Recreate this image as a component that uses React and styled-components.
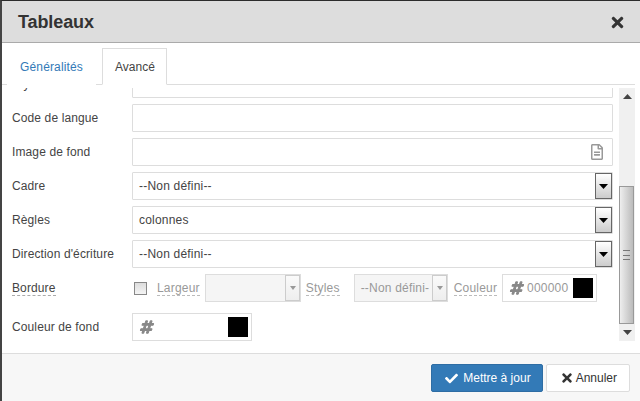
import React from "react";
import styled, { createGlobalStyle } from "styled-components";
import { FaCheck, FaTimes, FaRegFileAlt, FaHashtag } from "react-icons/fa";

const Global = createGlobalStyle`
  html, body {
    margin: 0;
    padding: 0;
    background: #fff;
  }
  body {
    font-family: "Liberation Sans", Arial, sans-serif;
    font-size: 12px;
    color: #333;
  }
`;

const rows = [
  { label: "Code de langue", type: "text" },
  { label: "Image de fond", type: "file" },
  { label: "Cadre", type: "select", value: "--Non défini--" },
  { label: "Règles", type: "select", value: "colonnes" },
  { label: "Direction d'écriture", type: "select", value: "--Non défini--" },
];

const Arrow = ({ up }) => (
  <svg width="9" height="5" viewBox="0 0 9 5">
    <path d={up ? "M0 5 L4.5 0 L9 5 Z" : "M0 0 L9 0 L4.5 5 Z"} fill="currentColor" />
  </svg>
);

const App = () => {
  return (
    <Dialog>
      <Global />
      <Header>
        <Title>Tableaux</Title>
        <CloseIcon>
          <FaTimes size={17} />
        </CloseIcon>
      </Header>

      <Tabs>
        <Tab>Généralités</Tab>
        <Tab active>Avancé</Tab>
      </Tabs>

      <Body>
        <Pane>
          <Row clipped>
            <Label>Style</Label>
            <TextBox />
          </Row>
          {rows.map((row) => (
            <Row key={row.label}>
              <Label>{row.label}</Label>
              <TextBox>
                {row.value && <Value>{row.value}</Value>}
                {row.type === "file" && (
                  <FileIcon>
                    <FaRegFileAlt size={16} />
                  </FileIcon>
                )}
                {row.type === "select" && (
                  <SelectButton>
                    <Arrow />
                  </SelectButton>
                )}
              </TextBox>
            </Row>
          ))}
          <Row>
            <Label>
              <Dashed>Bordure</Dashed>
            </Label>
            <Inline>
              <Check />
              <SubLabel before="10px" after="5px">
                Largeur
              </SubLabel>
              <MiniSelect width="96px" />
              <SubLabel before="5px" after="14px">
                Styles
              </SubLabel>
              <MiniSelect width="94px">
                <MiniValue>--Non défini-</MiniValue>
              </MiniSelect>
              <SubLabel before="6px" after="5px">
                Couleur
              </SubLabel>
              <ColorBox width="95px">
                <Hash>
                  <FaHashtag size={14} stroke="currentColor" strokeWidth={40} />
                </Hash>
                <ColorText>000000</ColorText>
                <Swatch />
              </ColorBox>
            </Inline>
          </Row>
          <Row last>
            <Label>Couleur de fond</Label>
            <ColorBox width="120px">
              <Hash>
                <FaHashtag size={14} stroke="currentColor" strokeWidth={40} />
              </Hash>
              <Swatch />
            </ColorBox>
          </Row>
        </Pane>

        <Scrollbar>
          <ScrollEnd>
            <Arrow up />
          </ScrollEnd>
          <Track>
            <Thumb>
              <Grip />
            </Thumb>
          </Track>
          <ScrollEnd>
            <Arrow />
          </ScrollEnd>
        </Scrollbar>
      </Body>

      <Footer>
        <Button primary>
          <FaCheck size={13} />
          Mettre à jour
        </Button>
        <Button>
          <FaTimes size={14} />
          Annuler
        </Button>
      </Footer>
    </Dialog>
  );
};

const Dialog = styled.div`
  width: 640px;
  height: 401px;
  box-sizing: border-box;
  border-top: 1px solid #2b2b2b;
  border-left: 2px solid #444;
  display: flex;
  flex-direction: column;
  background: #fff;
  overflow: hidden;
`;

const Header = styled.div`
  height: 42px;
  flex: none;
  box-sizing: border-box;
  background: #dddddd;
  border-bottom: 1px solid #aaa;
  display: flex;
  align-items: center;
  justify-content: space-between;
  padding: 2px 14px 0 16px;
`;

const Title = styled.div`
  font-size: 18px;
  font-weight: bold;
  letter-spacing: -0.1px;
  color: #333;
`;

const CloseIcon = styled.div`
  display: flex;
  color: #333;
`;

const Tabs = styled.div`
  height: 42px;
  flex: none;
  box-sizing: border-box;
  padding: 5px 0 0 5px;
  margin-right: 5px;
  border-bottom: 1px solid #ddd;
  display: flex;
  gap: 6px;
`;

const Tab = styled.div`
  height: 37px;
  box-sizing: border-box;
  padding: 0 ${(p) => (p.active ? "11px" : "12px")} 0 12px;
  display: flex;
  align-items: center;
  font-size: 12px;
  letter-spacing: ${(p) => (p.active ? "0" : "0.15px")};
  color: ${(p) => (p.active ? "#444" : "#337ab7")};
  border: 1px solid ${(p) => (p.active ? "#ddd" : "transparent")};
  border-bottom: ${(p) => (p.active ? "1px solid #fff" : "none")};
  background: #fff;
`;

const Body = styled.div`
  flex: 1;
  min-height: 0;
  padding-top: 3px;
  display: flex;
`;

const Pane = styled.div`
  flex: 1;
  min-width: 0;
  overflow: hidden;
  padding: 0 5px 0 10px;
  display: flex;
  flex-direction: column;
`;

const Row = styled.div`
  display: flex;
  align-items: center;
  flex: none;
  height: 28px;
  margin-top: ${(p) => (p.clipped ? "-18px" : p.last ? "11px" : "6px")};
`;

const Label = styled.div`
  width: 120px;
  flex: none;
  font-size: 12px;
  letter-spacing: 0.12px;
  color: #444;
`;

const Dashed = styled.span`
  display: inline-block;
  line-height: 14px;
  border-bottom: 1px dashed #aaa;
`;

const TextBox = styled.div`
  position: relative;
  flex: 1;
  height: 28px;
  box-sizing: border-box;
  border: 1px solid #ddd;
  display: flex;
  align-items: center;
  border-radius: 1px;
`;

const Value = styled.span`
  padding-left: 6px;
  font-size: 12px;
  letter-spacing: 0.2px;
  color: #444;
`;

const FileIcon = styled.span`
  margin-left: auto;
  margin-right: 7px;
  display: flex;
  color: #999;
`;

const SelectButton = styled.div`
  margin-left: auto;
  width: 17px;
  height: 26px;
  box-sizing: border-box;
  border: 1px solid #666;
  background: linear-gradient(#fff, #ccc);
  display: flex;
  align-items: center;
  justify-content: center;
  color: #000;
`;

const Inline = styled.div`
  display: flex;
  align-items: center;
  margin-left: 2px;
`;

const Check = styled.div`
  width: 13px;
  height: 13px;
  box-sizing: border-box;
  border: 1px solid #888;
  background: linear-gradient(#ddd, #f4f4f4);
`;

const SubLabel = styled.span`
  font-size: 12px;
  letter-spacing: 0.2px;
  color: #999;
  border-bottom: 1px dashed #bbb;
  line-height: 14px;
  margin-left: ${(p) => p.before};
  margin-right: ${(p) => p.after};
`;

const MiniSelect = styled.div`
  width: ${(p) => p.width};
  height: 28px;
  box-sizing: border-box;
  border: 1px solid #ddd;
  background: #f5f5f5;
  display: flex;
  align-items: center;
  position: relative;
  &::after {
    content: "";
    position: absolute;
    right: 0;
    top: 0;
    bottom: 0;
    width: 15px;
    box-sizing: border-box;
    border: 1px solid #ccc;
    background: linear-gradient(#fafafa, #eee);
  }
  &::before {
    content: "";
    position: absolute;
    z-index: 1;
    right: 4px;
    top: 11px;
    border: 3.5px solid transparent;
    border-top: 4px solid #999;
  }
`;

const MiniValue = styled.span`
  font-size: 12px;
  letter-spacing: 0.2px;
  color: #999;
  padding-left: 6px;
  white-space: nowrap;
`;

const ColorBox = styled.div`
  width: ${(p) => p.width};
  height: 28px;
  box-sizing: border-box;
  border: 1px solid #ddd;
  display: flex;
  align-items: center;
  padding: 0 2px 0 7px;
`;

const Hash = styled.span`
  display: flex;
  color: #888;
  transform: skewX(-8deg);
`;

const ColorText = styled.span`
  font-size: 12px;
  letter-spacing: 0.2px;
  color: #999;
  margin-left: 3px;
`;

const Swatch = styled.div`
  margin-left: auto;
  width: 20px;
  height: 20px;
  margin-right: 1px;
  background: #000;
`;

const Scrollbar = styled.div`
  width: 16px;
  flex: none;
  margin: 0 5px 12px 1px;
  background: #f0f0f0;
  display: flex;
  flex-direction: column;
`;

const ScrollEnd = styled.div`
  height: 17px;
  flex: none;
  display: flex;
  align-items: center;
  justify-content: center;
  color: #444;
`;

const Track = styled.div`
  flex: 1;
  display: flex;
  flex-direction: column;
  justify-content: flex-end;
`;

const Thumb = styled.div`
  height: 138px;
  margin-right: 1px;
  box-sizing: border-box;
  border: 1px solid #999;
  background: linear-gradient(90deg, #eee, #bbb);
  display: flex;
  align-items: center;
  justify-content: center;
`;

const Grip = styled.div`
  width: 7px;
  height: 8px;
  border-top: 1px solid #777;
  border-bottom: 1px solid #777;
  background: linear-gradient(#777, #777) center / 100% 1px no-repeat;
`;

const Footer = styled.div`
  height: 48px;
  flex: none;
  box-sizing: border-box;
  border-top: 1px solid #ddd;
  background: #f7f7f7;
  padding: 10px 10px 0 0;
  display: flex;
  justify-content: flex-end;
  align-items: flex-start;
  gap: 3px;
`;

const Button = styled.div`
  height: 28px;
  box-sizing: border-box;
  padding: ${(p) => (p.primary ? "0 11px 0 13px" : "0 12px 0 13px")};
  display: flex;
  align-items: center;
  gap: ${(p) => (p.primary ? "5px" : "2px")};
  border-radius: 2px;
  font-size: 12px;
  color: ${(p) => (p.primary ? "#fff" : "#333")};
  background: ${(p) => (p.primary ? "#337ab7" : "#fff")};
  border: 1px solid ${(p) => (p.primary ? "#2e6da4" : "#ddd")};
`;

export default App;
